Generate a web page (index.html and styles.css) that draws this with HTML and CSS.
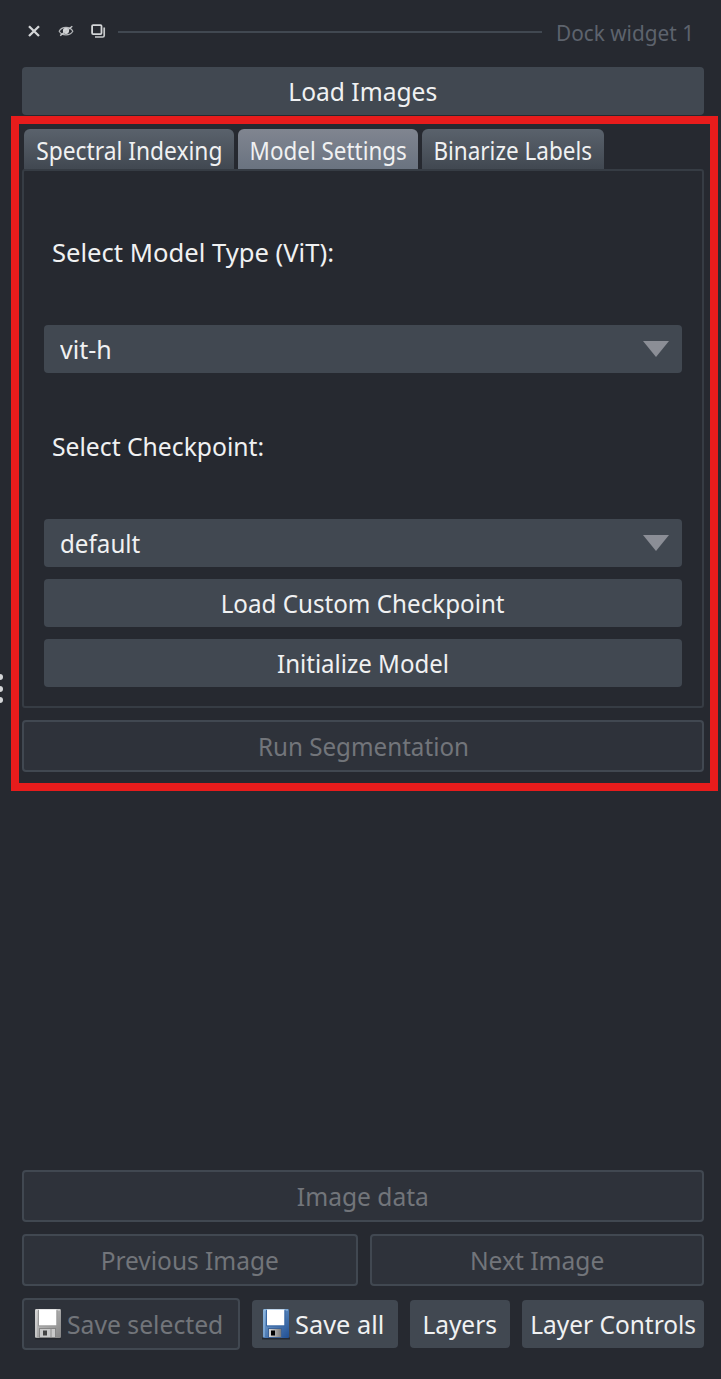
FILE: index.html
```
<!DOCTYPE html>
<html lang="en">
<head>
<meta charset="utf-8">
<title>Dock widget 1</title>
<link rel="stylesheet" href="styles.css">
</head>
<body>
<main class="dock">
  <header class="titlebar">
    <svg class="tool" viewBox="0 0 16 16"><path d="M3 3.200l10 9.800M13 3.200L3 13" fill="none" stroke="#d4d6d8" stroke-width="2.3"/></svg>
    <svg class="tool" viewBox="0 0 16 16"><path d="M1.200 8.200C4 3 12 3 14.800 8.200 12 13 4 13 1.200 8.200z" fill="none" stroke="#b4b6b9" stroke-width="1.200"/><circle cx="8" cy="7.800" r="3.100" fill="#d4d6d8"/><path d="M2.200 12.600L14.300 3.200" stroke="#c8cacc" stroke-width="1.4"/></svg>
    <svg class="tool" viewBox="0 0 16 16"><rect x="2.100" y="2.100" width="9.400" height="9" rx="1" fill="none" stroke="#d4d6d8" stroke-width="1.8"/><path d="M14.200 4.500v8q0 1.500-1.500 1.500H5" fill="none" stroke="#c8cacc" stroke-width="1.700"/></svg>
    <span class="rule"></span>
    <span class="title">Dock widget 1</span>
  </header>
  <button class="btn"><span class="t-load">Load Images</span></button>
  <nav class="tabs">
    <button class="tab"><span class="t-spec">Spectral Indexing</span></button>
    <button class="tab active"><span class="t-model">Model Settings</span></button>
    <button class="tab"><span class="t-bin">Binarize Labels</span></button>
  </nav>
  <section class="panel">
    <div class="label"><span class="t-type">Select Model Type (ViT):</span></div>
    <div class="select"><span class="t-vit">vit-h</span><svg class="arrow" viewBox="0 0 26 16"><path d="M0 0h26L13 16z" fill="#8b8e96"/></svg></div>
    <div class="label"><span class="t-check">Select Checkpoint:</span></div>
    <div class="select"><span class="t-def">default</span><svg class="arrow" viewBox="0 0 26 16"><path d="M0 0h26L13 16z" fill="#8b8e96"/></svg></div>
    <button class="btn gap"><span class="t-custom">Load Custom Checkpoint</span></button>
    <button class="btn gap"><span class="t-init">Initialize Model</span></button>
  </section>
  <button class="btn off run"><span class="t-run">Run Segmentation</span></button>
  <footer class="actions">
    <button class="btn off"><span class="t-data">Image data</span></button>
    <div class="pair">
      <button class="btn off"><span class="t-prev">Previous Image</span></button>
      <button class="btn off"><span class="t-next">Next Image</span></button>
    </div>
    <div class="tools">
      <button class="btn off save">
        <svg class="disk" viewBox="0 0 28 32"><defs><linearGradient id="g1" x2="1" y2="1"><stop stop-color="#ccc"/><stop offset="1" stop-color="#858585"/></linearGradient></defs><path d="M1 30.500h26" stroke="#24272d" stroke-width="2"/><rect x="1" y="1" width="26" height="29" rx="1.200" fill="url(#g1)"/><path d="M2 29V2h24" fill="none" stroke="#ddd"/><rect x="5" y="1.500" width="17.500" height="16" fill="#fff"/><path d="M4.500 2v16h18.500V2" fill="none" stroke="#999"/><rect x="5.500" y="20.500" width="16" height="9" fill="#c9c9c9" stroke="#858585"/><rect x="9" y="22.500" width="4" height="5" fill="#444"/><path d="M17 21v8" stroke="#aaa" stroke-width="2"/></svg>
        <span class="t-sel">Save selected</span></button>
      <button class="btn save">
        <svg class="disk" viewBox="0 0 28 32"><defs><linearGradient id="g2" x2="1" y2="1"><stop stop-color="#80abd7"/><stop offset="1" stop-color="#204f93"/></linearGradient><linearGradient id="g3" x2="1"><stop stop-color="#ddd"/><stop offset="1" stop-color="#777"/></linearGradient></defs><path d="M0 30.500h28" stroke="#252a32" stroke-width="2"/><rect x="1" y="1" width="26" height="29" rx="1.200" fill="url(#g2)"/><path d="M2 29V2h24" fill="none" stroke="#99c0e3"/><rect x="5" y="1.500" width="17.500" height="16" fill="#fff"/><path d="M4.500 2v16h18.500V2" fill="none" stroke="#3967a2"/><rect x="6.500" y="20.500" width="13" height="9" fill="url(#g3)" stroke="#3d6295"/><rect x="9" y="22.500" width="4" height="5" fill="#000"/></svg>
        <span class="t-all">Save all</span></button>
      <button class="btn"><span class="t-lay">Layers</span></button>
      <button class="btn"><span class="t-ctl">Layer Controls</span></button>
    </div>
  </footer>
  <div class="highlight"></div>
  <div class="grip"><i></i><i></i><i></i></div>
</main>
</body>
</html>
```
FILE: styles.css
```
* { box-sizing: border-box; }
body { margin: 0; background: #262930; color: #f0f1f2; font: 26px/32px "Noto Sans", sans-serif; }
.dock { position: relative; height: 1379px; padding: 0 17px 29px 22px; display: flex; flex-direction: column; overflow: hidden; }
.titlebar { height: 67px; padding: 0 10px 5px 4px; display: flex; align-items: center; gap: 16px; flex: none; }
.tool { width: 16px; height: 16px; flex: none; }
.rule { flex: 1; height: 2px; margin: 2px -2px 0 -4px; background: #414851; }
.title { width: 138px; padding-top: 2px; font-size: 22px; color: #5d636d; }
button { border: 0; font: inherit; color: inherit; padding: 0; margin: 0; }
span { white-space: pre; }
.btn { height: 48px; flex: none; border-radius: 4px; background: #414851; display: flex; align-items: center; justify-content: center; }
.off { height: 52px; border: 2px solid #414851; background: #2e323a; color: #72757a; }
.tabs { display: flex; gap: 4px; height: 40px; margin: 14px 0 0 2px; flex: none; }
.tab { width: 210px; padding-top: 1px; border-radius: 6px 6px 0 0; background: linear-gradient(#5a626c, #414851); display: flex; align-items: center; justify-content: center; }
.tab.active { width: 180px; background: linear-gradient(#808590, #6a7380); }
.tab:last-child { width: 182px; }
.panel { height: 539px; border: 2px solid #363c44; border-radius: 3px; padding: 10px 20px 0; display: flex; flex-direction: column; flex: none; }
.label { height: 144px; padding: 0 0 2px 8px; display: flex; align-items: center; }
.select + .label { height: 146px; padding-bottom: 0; }
.select { height: 48px; border-radius: 4px; background: #414851; padding: 0 13px 0 16px; display: flex; align-items: center; justify-content: space-between; }
.arrow { width: 26px; height: 16px; }
.gap, .run { margin-top: 12px; }
.actions { margin-top: auto; display: flex; flex-direction: column; gap: 12px; }
.pair { display: grid; grid-template-columns: 336px 334px; gap: 12px; }
.tools { display: grid; grid-template-columns: 218px 146px 100px 182px; gap: 12px; align-items: center; }
.save { gap: 5px; justify-content: flex-start; padding-left: 10px; }
.disk { width: 28px; height: 32px; flex: none; }

/* Horizontal proportions of the interface lettering */
.title, .label span, .select span, .save span { transform-origin: left; }
.title, .t-load, .t-data, .t-next { transform: scaleX(.945); }
.t-spec { transform: scaleX(.876); }
.t-model { transform: scaleX(.862); }
.t-bin { transform: scaleX(.865); }
.t-type { transform: scaleX(.985); }
.t-vit { transform: scaleX(.962); }
.t-check, .t-sel { transform: scaleX(.95); }
.t-def, .t-custom, .t-run { transform: scaleX(.93); }
.t-init { transform: scaleX(.925); }
.t-prev, .t-lay, .t-ctl { transform: scaleX(.94); }
.t-all { transform: scaleX(.975); }

.highlight { position: absolute; left: 11px; top: 116px; width: 707px; height: 675px; border: 8px solid #e71c1c; }
.grip { position: absolute; left: -3px; top: 674px; display: flex; flex-direction: column; gap: 5.5px; }
.grip i { width: 6px; height: 6px; border-radius: 50%; background: #d4d6d8; }
```
